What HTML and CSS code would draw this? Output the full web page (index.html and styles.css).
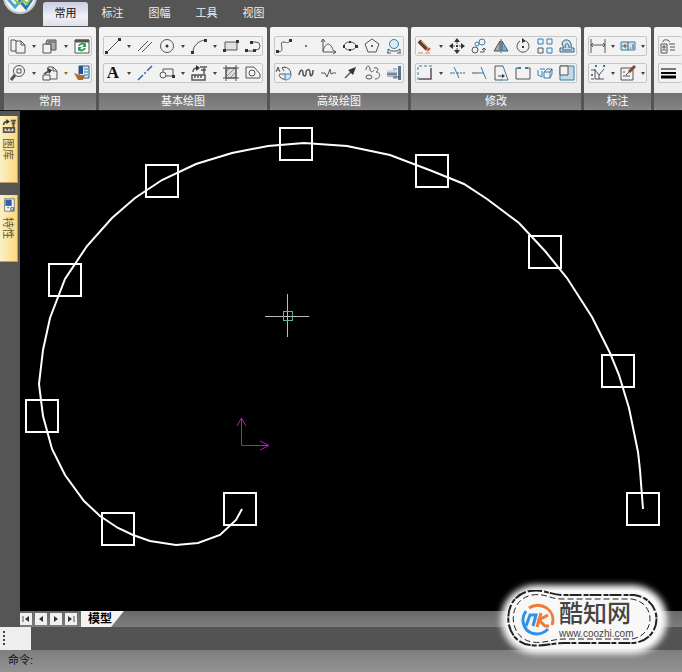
FILE: index.html
```
<!DOCTYPE html>
<html lang="zh-CN">
<head>
    <meta charset="UTF-8">
    <meta name="viewport" content="width=device-width, initial-scale=1.0">
    <title>CAD 绘图</title>
    <link rel="stylesheet" href="styles.css">
</head>
<body>
    <!-- 菜单选项卡 -->
    <header class="menu-bar">
        <button class="app-button" aria-label="应用菜单">
            <svg width="34" height="34" viewBox="0 0 34 34">
                <circle cx="17" cy="17" r="16" fill="#f4f6f8" stroke="#c5c9cc" stroke-width="2"/>
                <path d="M5 19l7 8 6-7" fill="none" stroke="#48a9d8" stroke-width="3"/>
                <path d="M16 20l7 8 6-9" fill="none" stroke="#2879b8" stroke-width="3"/>
                <path d="M10 18l6 6 4-4 4 4 4-6" fill="none" stroke="#8cc152" stroke-width="2"/>
            </svg>
        </button>
        <nav class="tabs">
            <button class="tab active">常用</button>
            <button class="tab">标注</button>
            <button class="tab">图幅</button>
            <button class="tab">工具</button>
            <button class="tab">视图</button>
        </nav>
    </header>

    <!-- 功能区 -->
    <div class="ribbon">
        <section class="panel">
            <div class="tool-row">
                <button class="tool" aria-label="复制"><svg viewBox="0 0 18 18"><path d="M7 14H2V3h4l2 2M7 4h5l4 4v8H7zM12 4v4h4"/></svg></button>
                <button class="caret" aria-label="更多"></button>
                <button class="tool" aria-label="粘贴"><svg viewBox="0 0 18 18"><path d="M2 7h8v9H2z"/><path class="gray" d="M5 6l1-3h9v10h-5V7H5zM7 5h7"/></svg></button>
                <button class="caret" aria-label="更多"></button>
                <button class="tool" aria-label="刷新"><svg viewBox="0 0 18 18"><path fill="#fff" d="M2 3h14v13H2z"/><path d="M2 4h14" stroke-width="3"/><path class="green" d="M6 9c1-3 5-3 6-1M12 11c-1 3-5 3-6 1"/><path fill="#22a055" stroke="none" d="M13 6v4H9zM5 14v-4h4z"/></svg></button>
            </div>
            <div class="tool-row">
                <button class="tool" aria-label="缩放"><svg viewBox="0 0 18 18"><circle cx="10" cy="7" r="5.5"/><path d="M8 5h4v4H8z"/><path d="M6 11l-4 5" stroke-width="3"/></svg></button>
                <button class="caret" aria-label="更多"></button>
                <button class="tool" aria-label="带基点复制"><svg viewBox="0 0 18 18"><path d="M7 7V3h5l4 4v8H9M12 3v4h4M2 11h7v5H2z"/><path class="solid" d="M6 4l5 2-3 4z"/><path d="M3 10l5-3" stroke-width="2"/></svg></button>
                <button class="caret brown" aria-label="更多"></button>
                <button class="tool" aria-label="格式刷"><svg viewBox="0 0 18 18"><path fill="#dbe9f5" stroke="#26558a" d="M6 2h10v12H6z"/><path fill="#26558a" stroke="none" d="M6 2h4v8H6z"/><path class="blue" d="M11 5h4M11 8h4M11 11h4"/><path fill="#b56a2d" stroke="none" d="M1 9l5 2h6l-2 5H5z"/></svg></button>
            </div>
            <h2 class="panel-title">常用</h2>
        </section>

        <section class="panel">
            <div class="tool-row">
                <button class="tool" aria-label="直线"><svg viewBox="0 0 18 18"><path d="M3 15L15 3"/><path class="solid" d="M1 14h3v3H1zM14 1h3v3h-3z"/></svg></button>
                <button class="caret" aria-label="更多"></button>
                <button class="tool" aria-label="平行线"><svg viewBox="0 0 18 18"><path d="M2 14L12 4M6 15L16 5"/></svg></button>
                <button class="tool" aria-label="圆"><svg viewBox="0 0 18 18"><circle cx="9" cy="9" r="6.5"/><circle class="solid" cx="9" cy="9" r="1.5"/></svg></button>
                <button class="caret" aria-label="更多"></button>
                <button class="tool" aria-label="圆弧"><svg viewBox="0 0 18 18"><path d="M3 15C3 9 8 4 15 3"/><path class="solid" d="M1 14h3v3H1zM14 2h3v3h-3z"/></svg></button>
                <button class="caret" aria-label="更多"></button>
                <button class="tool" aria-label="矩形"><svg viewBox="0 0 18 18"><path fill="#e1e1e1" d="M3 5h12v8H3z"/><path class="solid" d="M1 12h3v3H1zM14 3h3v3h-3z"/></svg></button>
                <button class="tool" aria-label="多段线"><svg viewBox="0 0 18 18"><path d="M2 14h7M8 5h4a4 4 0 0 1 0 8h-1"/><path class="solid" d="M1 12h3v3H1zM9 12h3v3H9zM6 4h3v3H6z"/></svg></button>
            </div>
            <div class="tool-row">
                <button class="tool letter" aria-label="文字">A</button>
                <button class="caret" aria-label="更多"></button>
                <button class="tool" aria-label="中心线"><svg viewBox="0 0 18 18"><path stroke="#3560a8" d="M2 16L16 2" stroke-width="1.5" stroke-dasharray="7 2 2 2"/></svg></button>
                <button class="tool" aria-label="插入块"><svg viewBox="0 0 18 18"><path d="M5 8V5h10v7H8"/><circle cx="5" cy="11" r="3"/><path class="solid" d="M14 11h3v3h-3z"/></svg></button>
                <button class="caret" aria-label="更多"></button>
                <button class="tool" aria-label="图库"><svg viewBox="0 0 18 18"><path stroke-width="1.5" d="M2 11h13v5H2zM5 11v3M8 11v3M11 11v3M3 8c0-3 2-4 4-4M10 3h7M11 6h5M14 4v6"/><path class="solid" d="M6 1l4 3-4 3z"/></svg></button>
                <button class="caret" aria-label="更多"></button>
                <button class="tool" aria-label="剖面线"><svg viewBox="0 0 18 18"><path fill="#ddd" d="M4 4h10v10H4z"/><path d="M4 1v16M14 1v16M1 4h16M1 14h16"/><path stroke-width=".6" d="M4 8l4-4M4 13l9-9M8 14l6-6"/></svg></button>
                <button class="tool" aria-label="局部放大"><svg viewBox="0 0 18 18"><path d="M2 3h8l6 7v4H2z"/><circle cx="8" cy="9" r="3"/></svg></button>
            </div>
            <h2 class="panel-title">基本绘图</h2>
        </section>

        <section class="panel">
            <div class="tool-row">
                <button class="tool" aria-label="样条"><svg viewBox="0 0 18 18"><path d="M3 15c9 0-1-11 6-10 4 1 5 1 6-2"/><path class="solid" d="M1 13h3v3H1zM14 2h3v3h-3z"/></svg></button>
                <button class="tool" aria-label="点"><svg viewBox="0 0 18 18"><path fill="#777" stroke="none" d="M8 8h2v2H8z"/></svg></button>
                <button class="tool" aria-label="公式曲线"><svg viewBox="0 0 18 18"><path d="M4 2v13h13M4 14C6 6 11 4 14 13M2 5l2-3 2 3M14 13l3 2-3 2"/></svg></button>
                <button class="tool" aria-label="椭圆"><svg viewBox="0 0 18 18"><ellipse cx="9" cy="9" rx="6" ry="4"/><path class="solid" d="M2 8h2v3H2zM8 4h2v2H8zM14 8h3v3h-3zM8 12h2v2H8z"/></svg></button>
                <button class="tool" aria-label="正多边形"><svg viewBox="0 0 18 18"><path d="M9 2l7 5-3 8H5L2 7z"/><circle class="solid" cx="9" cy="9" r="1"/></svg></button>
                <button class="tool" aria-label="圆弧拟合"><svg viewBox="0 0 18 18"><circle cx="9" cy="7" r="4.5" fill="#d9edf9" stroke="#397ca8"/><path d="M3 16v-4l3 2h6l3-2v4M2 16h4M12 16h4"/></svg></button>
            </div>
            <div class="tool-row">
                <button class="tool" aria-label="局部视图"><svg viewBox="0 0 18 18"><path d="M7 4a6 6 0 1 1-3 7"/><path class="blue" fill="#cce6f5" d="M10 10h6c0 4-2 6-6 6z"/><path d="M1 8l2-5 2 5M2 6h2M10 3L7 4l2 3M4 10h6"/></svg></button>
                <button class="tool" aria-label="波浪线"><svg viewBox="0 0 18 18"><path stroke-width="1.5" d="M2 11c1-6 4-6 4-2s3 4 3 0 4-5 4 0 3 3 3-3"/></svg></button>
                <button class="tool" aria-label="双折线"><svg viewBox="0 0 18 18"><path d="M2 9h4l2 4 3-8 1 5 2-1h3"/></svg></button>
                <button class="tool" aria-label="箭头"><svg viewBox="0 0 18 18"><path d="M4 14l6-6" stroke-width="1.5"/><path class="solid" d="M15 3l-3 8-5-5z"/></svg></button>
                <button class="tool" aria-label="齿轮"><svg viewBox="0 0 18 18"><path d="M3 6c0-5 4-5 4-1s3 3 4 1M11 4c6-1 4 3 2 4 5 0 5 7-1 7"/><ellipse cx="6" cy="13" rx="3" ry="2"/></svg></button>
                <button class="tool" aria-label="孔轴"><svg viewBox="0 0 18 18"><path fill="#a9b9c8" stroke="none" d="M2 6h6v7H2zM8 4h4v11H8z"/><path fill="#5d7690" stroke="none" d="M13 2h3v14h-3z"/><path d="M2 10h10M8 13h8"/><path stroke="#fff" d="M2 7h11"/></svg></button>
            </div>
            <h2 class="panel-title">高级绘图</h2>
        </section>

        <section class="panel">
            <div class="tool-row">
                <button class="tool" aria-label="删除"><svg viewBox="0 0 18 18"><path stroke="#683c24" stroke-width="4" d="M3 4l8 8"/><path stroke="#e2a56c" d="M5 4l8 8"/><path stroke="#c9503b" stroke-width="2" d="M11 14l3-3"/><path stroke="#c98b3a" d="M2 16h14" stroke-dasharray="5 2"/></svg></button>
                <button class="caret" aria-label="更多"></button>
                <button class="tool" aria-label="平移"><svg viewBox="0 0 18 18"><path d="M9 3v12M3 9h12" stroke-dasharray="4 4"/><path class="solid" d="M9 1l3 4H6zM9 17l3-4H6zM1 9l4-3v6zM17 9l-4-3v6zM8 8h2v2H8z"/></svg></button>
                <button class="tool" aria-label="平移复制"><svg viewBox="0 0 18 18"><circle cx="5" cy="13" r="3"/><circle class="blue" cx="12" cy="5" r="3"/><circle class="blue" cx="7" cy="7" r="2"/><path d="M10 15h4v-4M12 13l2-2 2 2"/></svg></button>
                <button class="tool" aria-label="镜像"><svg viewBox="0 0 18 18"><path fill="#a8adb1" d="M8 4v10H2z"/><path fill="#72b5d9" stroke="#39627b" d="M10 4v10h6z"/><path d="M9 2v14"/></svg></button>
                <button class="tool" aria-label="旋转"><svg viewBox="0 0 18 18"><path d="M6 4a6 6 0 1 0 6 0"/><path class="solid" d="M8 1l4 3-4 2zM8 9h2v2H8z"/></svg></button>
                <button class="tool" aria-label="阵列"><svg viewBox="0 0 18 18"><path class="blue" d="M2 2h5v5H2zM11 2h5v5h-5zM11 11h5v5h-5z"/><path d="M2 11h5v5H2z"/></svg></button>
                <button class="tool" aria-label="等距线"><svg viewBox="0 0 18 18"><path fill="#c9dfec" stroke="#2c6288" d="M2 15h14v-4h-3c2-10-9-10-9-4l2 4H2z"/><path d="M4 13h10M8 11c-3-5 4-6 3 0"/></svg></button>
            </div>
            <div class="tool-row">
                <button class="tool" aria-label="拉伸"><svg viewBox="0 0 18 18"><path class="blue" d="M2 16V2h14" stroke-dasharray="3 2"/><path d="M3 15h12V4" stroke-width="1.5"/></svg></button>
                <button class="caret" aria-label="更多"></button>
                <button class="tool" aria-label="裁剪"><svg viewBox="0 0 18 18"><path class="blue" d="M6 3l5 11M2 9h5"/><path d="M9 9h8" stroke-dasharray="2 1"/></svg></button>
                <button class="tool" aria-label="延伸"><svg viewBox="0 0 18 18"><path d="M2 9h7"/><path class="blue" d="M9 9h5M11 3l5 12"/></svg></button>
                <button class="tool" aria-label="倾斜"><svg viewBox="0 0 18 18"><path d="M11 2H3v14h7"/><path class="blue" d="M11 2l5 14H9"/><path d="M6 12h5"/><path class="solid" d="M10 10l3 2-3 2z"/></svg></button>
                <button class="tool" aria-label="打断"><svg viewBox="0 0 18 18"><path d="M4 4H2v11h14V4h-2"/><path class="blue" d="M4 4h3M11 4h3" stroke-width="2"/></svg></button>
                <button class="tool" aria-label="三维拉伸"><svg viewBox="0 0 18 18"><path class="blue" d="M8 8h6v6H8zM8 8l3-3h5v5l-2 4M2 6v5l4 2M4 5h5M6 7v6"/><path d="M14 8l2-3"/></svg></button>
                <button class="tool" aria-label="缩放图形"><svg viewBox="0 0 18 18"><path fill="#bfdbea" stroke="#397ca8" d="M2 2h14v14H2z"/><path fill="#f3f3f3" d="M2 2h8v9H2z"/></svg></button>
            </div>
            <h2 class="panel-title">修改</h2>
        </section>

        <section class="panel">
            <div class="tool-row compact">
                <button class="tool" aria-label="尺寸标注"><svg viewBox="0 0 18 18"><path d="M2 2v14M16 2v14M2 8h14M4 6L2 8l2 2M14 6l2 2-2 2"/></svg></button>
                <button class="caret" aria-label="更多"></button>
                <button class="tool" aria-label="形位公差"><svg viewBox="0 0 18 18"><path fill="#cfe4f1" stroke="#397ca8" d="M2 5h14v8H2z"/><path d="M9 5v8M11 11h1M14 7v5M3 9h5M6 7v4"/></svg></button>
                <button class="caret" aria-label="更多"></button>
            </div>
            <div class="tool-row compact">
                <button class="tool" aria-label="坐标标注"><svg viewBox="0 0 18 18"><path d="M6 5v10h9M2 6h4M6 6l4 5 5-6M2 15h3M10 11v4"/><path class="blue" d="M6 2h2M14 2h2M2 11h2" stroke-width="2"/></svg></button>
                <button class="caret" aria-label="更多"></button>
                <button class="tool" aria-label="标注编辑"><svg viewBox="0 0 18 18"><path d="M2 4h12v12H2zM4 8h2M4 12h7"/><path stroke="#854a35" stroke-width="3" d="M16 2l-6 6"/><path d="M10 8l-3 3"/></svg></button>
                <button class="caret" aria-label="更多"></button>
            </div>
            <h2 class="panel-title">标注</h2>
        </section>

        <section class="panel panel-last">
            <div class="tool-row">
                <button class="tool" aria-label="图层"><svg viewBox="0 0 18 18"><path d="M2 7h6v9H2zM4 9h2v2H4zM3 13h4M4 5c0-3 5-3 7 0M10 7h6M11 10h5M11 13h5"/></svg></button>
            </div>
            <div class="tool-row">
                <button class="tool" aria-label="线宽"><svg viewBox="0 0 18 18"><path stroke="#000" d="M2 5h15"/><path stroke="#000" stroke-width="2" d="M2 9h15"/><path stroke="#000" stroke-width="3" d="M2 13h15"/></svg></button>
            </div>
            <h2 class="panel-title"></h2>
        </section>
    </div>

    <!-- 绘图区 -->
    <main class="workspace">
        <aside class="side-bar">
            <button class="side-tab">
                <svg width="16" height="16" viewBox="0 0 16 18"><path stroke-width="2" d="M2 11h12v5H2zM6 11v3M10 11v3M2 8c0-3 2-4 4-4M10 3h6M11 6h4M13 4v6"/><path class="solid" d="M5 1l4 3-4 3z"/></svg>
                <span>图库</span>
            </button>
            <button class="side-tab">
                <svg width="16" height="16" viewBox="0 0 16 18"><path fill="#eef3f8" stroke="#777" d="M3 2h11v14H3z"/><path fill="#2c62a8" stroke="none" d="M4 3h7v7H4z"/><path d="M6 12h2M10 12h3v3h-3z"/></svg>
                <span>特性</span>
            </button>
        </aside>
        <svg class="drawing" viewBox="20 111 662 500" preserveAspectRatio="xMinYMin meet">
            <!-- 样条曲线 -->
            <polyline class="curve" points="242,509 236,520 220,535 198,543 176,545 150,541 133,535 118,528 100,516 84,501 65,475 52,449 43,416 39,384 43,350 50,318 65,279 87,246 112,218 135,198 162,180 196,164 232,153 268,146 304,143 347,146 390,155 432,171 464,184 487,199 519,223 545,251 567,278 592,317 610,353 619,375 629,408 638,452 640,470 643,509"/>
            <!-- 夹点 -->
            <g class="grips">
                <rect x="224" y="493" width="32" height="32"/>
                <rect x="102" y="513" width="32" height="32"/>
                <rect x="26" y="400" width="32" height="32"/>
                <rect x="49" y="264" width="32" height="32"/>
                <rect x="146" y="165" width="32" height="32"/>
                <rect x="280" y="128" width="32" height="32"/>
                <rect x="416" y="155" width="32" height="32"/>
                <rect x="529" y="236" width="32" height="32"/>
                <rect x="602" y="355" width="32" height="32"/>
                <rect x="627" y="493" width="32" height="32"/>
            </g>
            <!-- 光标 -->
            <path class="cursor" d="M265 316.500h44M287.500 294v43"/>
            <rect class="pick" x="283.500" y="311.500" width="9" height="9"/>
            <!-- 坐标系 -->
            <path class="axis" d="M241.500 419v26.500H268M237 426l4.500-8 4.500 8M260 441l9 4.500-9 4.500"/>
        </svg>
    </main>

    <!-- 布局标签 -->
    <div class="layout-bar">
        <button class="step" aria-label="第一个"><svg viewBox="0 0 12 12"><path d="M3 3v6"/><path class="solid" d="M9 3v6L5 6z"/></svg></button>
        <button class="step" aria-label="上一个"><svg viewBox="0 0 12 12"><path class="solid" d="M8 3v6L4 6z"/></svg></button>
        <button class="step" aria-label="下一个"><svg viewBox="0 0 12 12"><path class="solid" d="M4 3v6l4-3z"/></svg></button>
        <button class="step" aria-label="最后一个"><svg viewBox="0 0 12 12"><path d="M9 3v6"/><path class="solid" d="M3 3v6l4-3z"/></svg></button>
        <button class="model-tab">模型</button>
    </div>
    <div class="tool-dock"><div class="dock-handle"></div></div>
    <footer class="command">命令:</footer>

    <!-- 水印 -->
    <div class="watermark">
        <svg class="watermark-edge" viewBox="0 0 156 59">
            <path d="M24 1C40-1 44 5 56 5h72c30 4 30 44 0 48H58c-12 0-20 4-34 2C-4 52-6 6 24 1z" stroke-width="2" stroke-dasharray="12 2 5 1"/>
            <path d="M26 5c13-2 18 4 30 4h70c24 4 24 36 0 40H58c-12 0-20 5-32 3C2 48 0 10 26 5z" stroke-dasharray="6 3"/>
        </svg>
        <svg class="watermark-logo" width="34" height="34" viewBox="0 0 34 34">
            <path stroke="#2f91e8" d="M5 8C-2 18 4 31 16 31c5 0 8-2 11-5"/>
            <path stroke="#f27a38" d="M8 5c11-8 28 2 23 17"/>
            <path stroke="#2f91e8" d="M5 23l4-11h6l-3 11"/>
            <path stroke="#f27a38" d="M20 10l-4 14M27 12l-9 5 6 6h4"/>
        </svg>
        <div class="watermark-text">
            <strong>酷知网</strong>
            <span>www.coozhi.com</span>
        </div>
    </div>
</body>
</html>
```
FILE: styles.css
```
* {
    box-sizing: border-box;
}
body {
    margin: 0;
    min-height: 100vh;
    display: flex;
    flex-direction: column;
    position: relative;
    overflow: hidden;
    background-color: #555;
    font-family: "Liberation Sans", "Noto Sans CJK SC", sans-serif;
    font-size: 11px;
}
button {
    padding: 0;
    border: none;
    background: none;
    font: inherit;
    cursor: pointer;
}
svg {
    display: block;
    fill: none;
    stroke: #555;
}
.solid {
    fill: #333;
    stroke: none;
}
.blue {
    stroke: #347fae;
}
.green {
    stroke: #22a055;
    stroke-width: 2;
}
.gray {
    fill: #aaa;
}

/* 菜单选项卡 */
.menu-bar {
    height: 26px;
    position: relative;
    overflow: hidden;
    padding: 2px 0 0 43px;
    background-color: #555;
}
.app-button {
    position: absolute;
    left: 3px;
    bottom: 12px;
}
.tabs {
    display: flex;
    gap: 2px;
    height: 24px;
}
.tab {
    width: 45px;
    padding-bottom: 4px;
    color: #eee;
    border-radius: 3px 3px 0 0;
}
.tab.active {
    color: #111;
    background: linear-gradient(#c9cce4, #f0f1f7 60%, #dedfe9);
}

/* 功能区 */
.ribbon {
    display: flex;
    gap: 3px;
    padding-left: 4px;
    height: 85px;
    overflow: hidden;
    border-bottom: 1px solid #111;
}
.panel {
    flex: none;
    display: flex;
    flex-direction: column;
    gap: 7px;
    padding-top: 9px;
    margin-top: 1px;
    border-radius: 2px;
    background: linear-gradient(#f4f4f4, #eaeaea);
    overflow: hidden;
}
.panel-last {
    flex: 1;
}
.tool-row {
    display: flex;
    gap: 4px;
    height: 20px;
    margin: 0 4px;
    border: 1px solid #c6c6c6;
    border-radius: 2px;
    background-color: #f2f2f2;
}
.tool-row.compact {
    gap: 3px;
}
.panel-last .tool-row {
    margin-right: 0;
    border-right: none;
}
.tool {
    width: 18px;
    height: 18px;
}
.tool:hover {
    background-color: #fbe3a0;
}
.letter {
    font-family: "Liberation Serif", serif;
    font-size: 17px;
    line-height: 18px;
    font-weight: bold;
    color: #111;
}
.caret {
    width: 6px;
    display: flex;
    align-items: center;
    justify-content: center;
}
.caret::before {
    content: "";
    border: 2px solid transparent;
    border-top: 3px solid #444;
    border-bottom: none;
}
.caret.brown::before {
    border-top-color: #96702e;
}
.panel-title {
    margin: 3px 0 0;
    height: 17px;
    line-height: 16px;
    font-size: 11px;
    font-weight: normal;
    text-align: center;
    color: #fff;
    background: linear-gradient(#717171, #858585);
}

/* 绘图区 */
.workspace {
    flex: 1;
    display: flex;
    background-color: #000;
}
.side-bar {
    width: 20px;
    display: flex;
    flex-direction: column;
    gap: 12px;
    padding-top: 5px;
    background-color: #555;
}
.side-tab {
    width: 18px;
    height: 67px;
    display: flex;
    flex-direction: column;
    align-items: center;
    gap: 4px;
    padding-top: 2px;
    border-right: 1px solid #b5a06a;
    border-bottom: 1px solid #b5a06a;
    background: linear-gradient(to right, #fbf0c8, #ffd97d);
    color: #6b5a38;
}
.side-tab span {
    writing-mode: vertical-rl;
    text-orientation: sideways;
}
.drawing {
    flex: 1;
    min-width: 0;
}
.curve {
    stroke: #fff;
    stroke-width: 2;
}
.grips {
    stroke: #fff;
    stroke-width: 2;
}
.cursor {
    stroke: #bbb;
}
.pick {
    stroke: #5cb894;
}
.axis {
    stroke: #b01bb8;
}

/* 底部 */
.layout-bar {
    display: flex;
    align-items: center;
    gap: 3px;
    height: 16px;
    padding-left: 20px;
    background: linear-gradient(to right, #555 20px, transparent 20px), linear-gradient(#686868, #7d7d7d);
}
.step {
    width: 12px;
    height: 12px;
    background-color: #f0f0f0;
}
.model-tab {
    width: 43px;
    height: 16px;
    padding: 0 5px 0 0;
    margin-left: 1px;
    line-height: 16px;
    font-size: 12px;
    font-weight: bold;
    color: #000;
    background-color: #f4f4f4;
    clip-path: polygon(0 0, 100% 0, 70% 100%, 0 100%);
}
.tool-dock {
    height: 23px;
    background-color: #535353;
}
.dock-handle {
    width: 31px;
    height: 23px;
    padding: 4px 3px;
    background-color: #eee;
}
.dock-handle::before {
    content: "";
    display: block;
    height: 14px;
    border-left: 2px dotted #444;
}
.command {
    height: 22px;
    padding-left: 8px;
    line-height: 21px;
    color: #111;
    background: linear-gradient(#7e7e7e, #939393);
}

/* 水印 */
.watermark {
    position: absolute;
    right: 20px;
    bottom: 23px;
    width: 156px;
    height: 59px;
    display: flex;
    align-items: center;
    gap: 4px;
    padding-left: 15px;
    border-radius: 30px;
    background-color: #f8f8f8;
    box-shadow: 0 0 6px 5px #f8f8f8;
}
.watermark-edge {
    position: absolute;
    left: 0;
    top: 0;
    width: 100%;
    height: 100%;
    stroke: #222;
}
.watermark-logo {
    stroke-width: 3;
}
.watermark-text {
    display: flex;
    flex-direction: column;
    color: #444;
}
.watermark-text strong {
    font-size: 24px;
    line-height: 28px;
    font-weight: 500;
}
.watermark-text span {
    font-size: 10px;
    line-height: 12px;
}
```
